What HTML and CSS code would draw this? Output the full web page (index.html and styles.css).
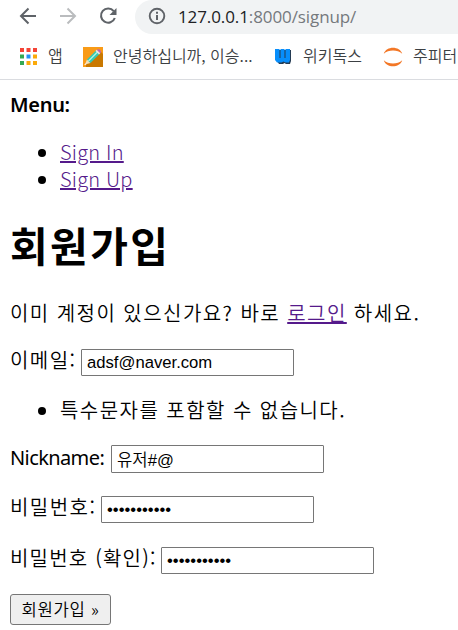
FILE: index.html
```html
<!DOCTYPE html>
<html lang="ko">
  <head>
    <meta charset="utf-8" />
    <meta name="viewport" content="width=device-width, initial-scale=1.0" />
    <title>회원가입</title>
    <link rel="stylesheet" href="styles.css">
  </head>
  <body>
    <header class="browser">
      <div class="toolbar">
        <svg class="nav-icon" width="18" height="18" viewBox="0 0 18 18" fill="none" stroke="#5f6368" stroke-width="2">
          <path d="M17 9H2.5M9.5 1.5L2 9l7.500 7.500" />
        </svg>
        <svg class="nav-icon" width="18" height="18" viewBox="0 0 18 18" fill="none" stroke="#babcbe" stroke-width="2">
          <path d="M1 9h14.500M8.500 1.500L16 9l-7.500 7.500" />
        </svg>
        <svg class="nav-icon" width="18" height="18" viewBox="0 0 18 18" fill="none" stroke="#5f6368" stroke-width="2.100">
          <path d="M14.700 4.200A7.100 7.100 0 1 0 15.800 11" />
          <path d="M17.500 1v7h-7z" fill="#5f6368" stroke="none" />
        </svg>
        <div class="address">
          <svg width="18" height="18" viewBox="0 0 18 18">
            <circle cx="9" cy="9" r="7.300" fill="none" stroke="#5f6368" stroke-width="1.900" />
            <path d="M8 8h2v5H8zM8 4.700h2v2H8z" fill="#5f6368" />
          </svg>
          <span class="url">127.0.0.1<span class="path">:8000/signup/</span></span>
        </div>
      </div>
      <nav class="bookmarks">
        <a class="apps">
          <svg width="17" height="17" viewBox="0 0 17 17">
            <path d="M0 0h4v4H0zM6.500 0h4v4h-4zM13 0h4v4h-4z" fill="#f44336" />
            <path d="M0 6.500h4v4H0zM0 13h4v4H0z" fill="#34a853" />
            <path d="M6.500 6.500h4v4h-4z" fill="#2491f5" />
            <path d="M13 6.500h4v4h-4zM6.500 13h4v4h-4zM13 13h4v4h-4z" fill="#fbaa0a" />
          </svg>
          <span>앱</span>
        </a>
        <a class="blog">
          <svg width="20" height="20" viewBox="0 0 20 20">
            <path d="M0 0h20v20H0z" fill="#f99b17" />
            <path d="M18 5l2 2v13H3v-4z" fill="#c97800" />
            <path d="M2 17.500l2-5 3.500 3.500z" fill="#f6dfb8" />
            <path d="M4 12.500l9-9 3.500 3.500-9 9z" fill="#35c9b1" />
            <path d="M5.500 14l9-9" stroke="#b6f3df" stroke-width="1.300" />
            <path d="M12.500 4l1.300-1.200 3.500 3.500L16 7.500z" fill="#e8e8e8" />
            <path d="M13.800 2.800q2-1 3.300.3t.4 3.200z" fill="#b75cc5" />
            <path d="M1 18l1.500-1.500 1 1z" fill="#fff" />
          </svg>
          <span>안녕하십니까, 이승...</span>
        </a>
        <a class="wiki">
          <svg width="17" height="17" viewBox="0 0 17 17">
            <path d="M1 2h15v11l-1 3h-4l-1.500-1L8 16H4l-2-3z" fill="#243b53" />
            <path d="M0 1h4.500v9h1V1h4v9h1V1H15v11l-1 2.500h-3.500l-2-1-2 1H2L0 12z" fill="#078efb" />
          </svg>
          <span>위키독스</span>
        </a>
        <a class="jupyter">
          <svg width="20" height="20" viewBox="0 0 20 20" fill="#f37726">
            <path d="M.8 6.800C3.200-1.200 16.800-1.200 19.200 6.800 14.500 2.400 5.500 2.400.8 6.800z" />
            <path d="M.8 13.200c2.400 8 16 8 18.400 0-4.700 4.400-13.700 4.400-18.400 0z" />
          </svg>
          <span>주피터</span>
        </a>
      </nav>
    </header>

    <main>
      <strong class="menu-title">Menu:</strong>
      <ul class="menu">
        <li><a href="#">Sign In</a></li>
        <li><a href="#">Sign Up</a></li>
      </ul>

      <h1>회원가입</h1>
      <p class="intro">이미 계정이 있으신가요? 바로 <a href="#">로그인</a> 하세요.</p>

      <form>
        <div class="field">
          <label for="email">이메일:</label>
          <input type="text" id="email" value="adsf@naver.com" />
        </div>
        <ul class="errors">
          <li>특수문자를 포함할 수 없습니다.</li>
        </ul>
        <div class="field nickname">
          <label for="nickname">Nickname:</label>
          <input type="text" id="nickname" value="유저#@" />
        </div>
        <div class="field password">
          <label for="password1">비밀번호:</label>
          <input type="password" id="password1" value="password123" />
        </div>
        <div class="field confirm">
          <label for="password2">비밀번호 (확인):</label>
          <input type="password" id="password2" value="password123" />
        </div>
        <button type="button">회원가입 »</button>
      </form>
    </main>
  </body>
</html>
```
FILE: styles.css
```css
* {
  box-sizing: border-box;
}

body {
  margin: 0;
  background: #fff;
  color: #000;
  font-family: "Noto Sans CJK KR", sans-serif;
  font-size: 20px;
  font-weight: 350;
  line-height: 27px;
  overflow: hidden;
}

a {
  color: #551a8b;
  text-decoration-thickness: 2px;
}

.browser {
  height: 80px;
  border-bottom: 1px solid #dadce0;
  white-space: nowrap;
  overflow: hidden;
}

.toolbar {
  display: flex;
  height: 34px;
  padding-left: 19px;
}

.nav-icon {
  flex: none;
  margin-top: 7px;
  margin-right: 22px;
}

.address {
  display: flex;
  flex: 1;
  height: 34px;
  margin-left: -4px;
  padding-left: 13px;
  border-radius: 17px 0 0 17px;
  background: #f1f3f4;
}

.address svg {
  flex: none;
  margin-top: 7px;
}

.url {
  margin-left: 12px;
  font-family: "Open Sans", sans-serif;
  font-size: 17px;
  font-weight: 400;
  line-height: 33px;
  letter-spacing: -0.1px;
  color: #202124;
}

.path {
  color: #75797d;
}

.bookmarks {
  display: flex;
  height: 45px;
  padding-left: 20px;
  font-size: 16px;
  color: #3c4043;
}

.bookmarks a {
  display: flex;
  flex: none;
  align-items: center;
  color: inherit;
}

.bookmarks span {
  margin-top: -2px;
}

.bookmarks svg {
  flex: none;
}

.apps {
  width: 63px;
  gap: 11px;
}

.blog {
  width: 192px;
  gap: 10px;
}

.wiki {
  width: 108px;
  gap: 11px;
}

.jupyter {
  gap: 10px;
}

main {
  padding: 11px 10px 0;
}

.menu-title {
  display: block;
  font-family: "Noto Sans", sans-serif;
  font-weight: 600;
  letter-spacing: -0.3px;
}

ul {
  margin: 20px 0;
  padding-left: 50px;
}

.menu a {
  font-weight: 300;
  letter-spacing: 0.2px;
}

h1 {
  margin: 25px 0 27px;
  font-size: 41px;
  font-weight: 700;
  line-height: 54px;
  letter-spacing: 2.4px;
}

p {
  margin: 0 0 21px;
}

.intro,
.errors,
label {
  letter-spacing: 1.45px;
  white-space: nowrap;
}

.intro {
  margin-top: 28px;
}

.field {
  display: flex;
  height: 27px;
}

.field label {
  flex: none;
  width: 71px;
  margin-top: -3px;
}

input {
  width: 213px;
  height: 27px;
  padding: 0 5px;
  border: 1px solid #767676;
  border-radius: 1px;
  background: #fff;
  color: #000;
  font-family: "Liberation Sans", "Noto Sans CJK KR", sans-serif;
  font-size: 16.67px;
  font-weight: 350;
}

form {
  padding-top: 2px;
}

.errors {
  margin: 20px 0 22px;
}

.nickname {
  height: 28px;
}

.field.nickname label {
  width: 101px;
  margin-top: -1px;
  font-family: "Noto Sans", sans-serif;
  font-weight: 400;
  letter-spacing: -0.6px;
}

.nickname input {
  height: 28px;
}

.password {
  margin-top: 23px;
}

.password label {
  width: 91px;
}

.confirm {
  margin-top: 24px;
}

.confirm label {
  width: 151px;
  letter-spacing: 1.2px;
}

button {
  display: block;
  width: 101px;
  height: 31px;
  margin-top: 20px;
  padding: 0 0 2px;
  border: 1px solid #767676;
  border-radius: 3px;
  background: #efefef;
  color: #000;
  font-family: "Noto Sans CJK KR", sans-serif;
  font-size: 16.67px;
  font-weight: 350;
  letter-spacing: 0.7px;
}
```
